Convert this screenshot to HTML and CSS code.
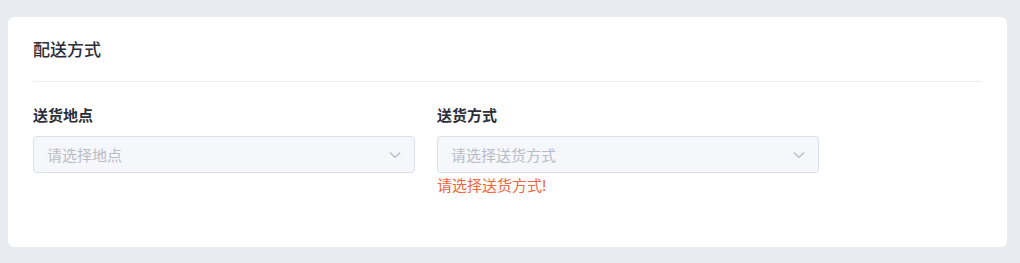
FILE: index.html
```html
<!DOCTYPE html>
<html lang="zh-CN">
<head>
    <meta charset="UTF-8">
    <title>配送方式</title>
    <link rel="stylesheet" href="styles.css">
</head>
<body>
    <div class="card">
        <h2 class="card-title">配送方式</h2>

        <div class="form-row">
            <div class="field">
                <label class="field-label">送货地点</label>
                <div class="select">
                    <span class="placeholder">请选择地点</span>
                    <svg class="arrow" width="12" height="8" viewBox="0 0 12 8"><path d="M1 1.5l5 5 5-5" fill="none" stroke="#b4b8c4" stroke-width="1.2"/></svg>
                </div>
            </div>
            <div class="field">
                <label class="field-label">送货方式</label>
                <div class="select">
                    <span class="placeholder">请选择送货方式</span>
                    <svg class="arrow" width="12" height="8" viewBox="0 0 12 8"><path d="M1 1.5l5 5 5-5" fill="none" stroke="#b4b8c4" stroke-width="1.2"/></svg>
                </div>
                <p class="error">请选择送货方式!</p>
            </div>
        </div>
    </div>
</body>
</html>
```

FILE: styles.css
```css
* {
    margin: 0;
    padding: 0;
    box-sizing: border-box;
}

body {
    background: #e9ebf0;
    font-family: Inter, "Noto Sans CJK SC", sans-serif;
    padding: 17px 13px 16px 8px;
}

.card {
    background: #fff;
    border-radius: 6px;
    padding: 21px 25px 54px;
    height: 230px;
}

.card-title {
    font-size: 17px;
    font-weight: 500;
    color: #2b2f3a;
    line-height: 24px;
    padding-bottom: 19px;
    border-bottom: 1px solid #eceef2;
}

.form-row {
    display: flex;
    gap: 22px;
    margin-top: 24px;
}

.field {
    width: 382px;
}

.field-label {
    display: block;
    font-size: 15px;
    font-weight: 700;
    color: #2b2f3a;
    line-height: 20px;
    margin-bottom: 10px;
}

.select {
    height: 37px;
    background: #f6f7fb;
    border: 1px solid #dcdfe8;
    border-radius: 4px;
    display: flex;
    align-items: center;
    justify-content: space-between;
    padding: 0 13px 0 13px;
}

.placeholder {
    font-size: 15px;
    color: #b9bcc6;
}

.error {
    font-size: 15px;
    color: #ef653d;
    line-height: 20px;
    margin-top: 3px;
}
```
